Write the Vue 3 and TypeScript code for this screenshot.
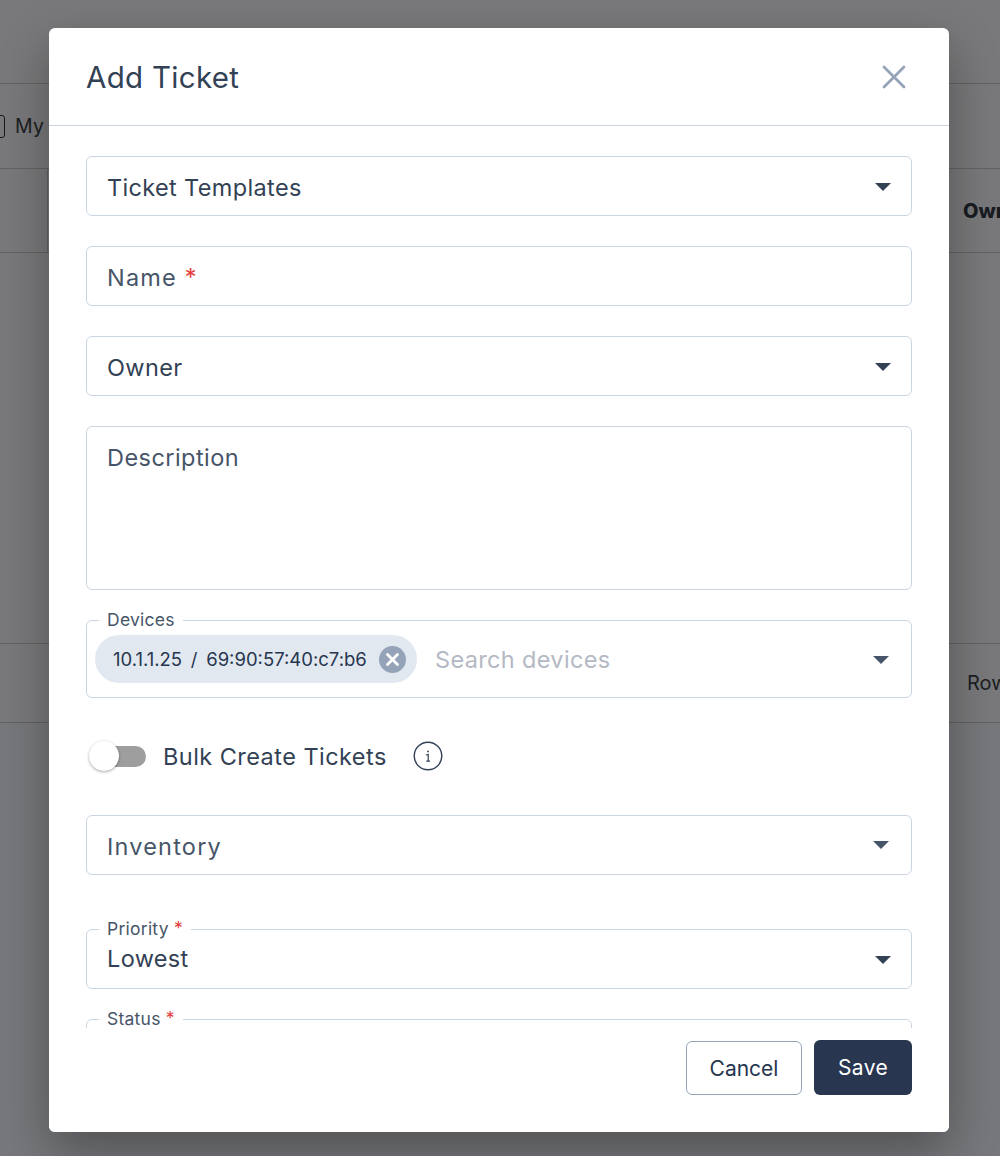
<script setup lang="ts">
const chip = '10.1.1.25 / 69:90:57:40:c7:b6'
</script>

<template>
  <div class="page">
    <header class="top-bar"></header>
    <div class="filter-bar">
      <span class="checkbox"></span>
      <span class="filter-label">My Tickets</span>
    </div>
    <div class="table-head">
      <span class="head-first"></span>
      <span class="head-cell">Owner</span>
    </div>
    <div class="table-empty"></div>
    <div class="table-foot">
      <span class="foot-text">Rows</span>
    </div>
    <div class="page-rest"></div>

    <div class="backdrop"></div>

    <section class="modal">
      <div class="modal-head">
        <h2 class="title">Add Ticket</h2>
        <svg class="close" width="24" height="24" viewBox="0 0 24 24" fill="none">
          <path d="M2 2 L22 22 M22 2 L2 22" stroke="#94a3b8" stroke-width="2.8" stroke-linecap="round" />
        </svg>
      </div>

      <div class="modal-body">
        <div class="field box">
          <span class="value">Ticket Templates</span>
          <span class="caret"></span>
        </div>
        <div class="field box">
          <span class="ph wide">Name <em class="req">*</em></span>
        </div>
        <div class="field box">
          <span class="value">Owner</span>
          <span class="caret"></span>
        </div>
        <div class="field textarea">
          <span class="ph">Description</span>
        </div>
        <div class="field devices">
          <label class="legend">Devices</label>
          <span class="chip">
            <span class="chip-text">{{ chip }}</span>
            <svg class="chip-x" width="27" height="27" viewBox="0 0 27 27">
              <circle cx="13.5" cy="13.5" r="13.5" fill="#94a3b8" />
              <path d="M8.5 8.5 L18.5 18.5 M18.5 8.5 L8.5 18.5" stroke="#fff" stroke-width="2.8" stroke-linecap="round" />
            </svg>
          </span>
          <span class="search">Search devices</span>
          <span class="caret soft"></span>
        </div>

        <div class="toggle-row">
          <span class="toggle"><span class="knob"></span></span>
          <span class="toggle-label">Bulk Create Tickets</span>
          <svg class="info" width="30" height="30" viewBox="0 0 30 30" fill="none">
            <circle cx="15" cy="15" r="13.8" stroke="#334155" stroke-width="1.4" />
            <path d="M13.6 13.8 L15.2 13.5 L15.2 20 M13.8 20.2 L16.6 20.2" stroke="#334155" stroke-width="1.2" stroke-linecap="round" />
            <circle cx="15" cy="10.4" r="0.9" fill="#334155" />
          </svg>
        </div>

        <div class="field box inventory">
          <span class="ph wide">Inventory</span>
          <span class="caret soft"></span>
        </div>

        <div class="field box priority">
          <label class="legend">Priority <em class="req">*</em></label>
          <span class="value low">Lowest</span>
          <span class="caret"></span>
        </div>
        <div class="field box">
          <label class="legend">Status <em class="req">*</em></label>
        </div>
      </div>

      <div class="modal-foot">
        <button class="btn cancel" type="button">Cancel</button>
        <button class="btn save" type="button">Save</button>
      </div>
    </section>
  </div>
</template>

<style>
html, body { margin: 0; padding: 0; }
</style>

<style scoped>
.page {
  position: relative;
  width: 1000px;
  height: 1156px;
  overflow: hidden;
  background: #f2f3f6;
  font-family: Inter, "Liberation Sans", sans-serif;
  display: flex;
  flex-direction: column;
}
.top-bar { height: 83px; flex: none; border-bottom: 1px solid #c4c4c6; box-sizing: content-box; }
.filter-bar {
  height: 85px;
  flex: none;
  border-bottom: 1px solid #c4c4c6;
  display: flex;
  align-items: center;
  margin-left: -14px;
  box-sizing: border-box;
}
.checkbox { width: 19px; height: 23px; border: 1.5px solid #333; border-radius: 3px; box-sizing: border-box; flex: none; }
.filter-label { font-size: 19.5px; letter-spacing: 0.2px; color: #3a3f47; margin-left: 10px; white-space: nowrap; }
.table-head {
  height: 83px;
  flex: none;
  border-bottom: 1px solid #c4c4c6;
  display: flex;
  align-items: center;
}
.head-first { width: 47px; height: 100%; flex: none; border-right: 1px solid #c4c4c6; }
.head-cell { margin-left: 915px; font-size: 20px; font-weight: 800; color: #333a45; white-space: nowrap; }
.table-empty { height: 390px; flex: none; }
.table-foot {
  height: 80px;
  flex: none;
  border-top: 1px solid #c4c4c6;
  border-bottom: 1px solid #c4c4c6;
  display: flex;
  align-items: center;
  padding-left: 967px;
  box-sizing: border-box;
}
.foot-text { font-size: 20px; color: #3a3f47; white-space: nowrap; }
.page-rest { flex: 1; background: #eef1f6; }
.backdrop { position: absolute; inset: 0; background: rgba(0, 0, 0, 0.5); }

.modal {
  position: absolute;
  left: 49px;
  top: 28px;
  width: 900px;
  height: 1104px;
  background: #fff;
  border-radius: 6px;
  box-shadow: 0 20px 50px 0 rgba(0, 0, 0, 0.32);
  display: flex;
  flex-direction: column;
  overflow: hidden;
}
.modal-head {
  height: 98px;
  flex: none;
  box-sizing: border-box;
  border-bottom: 1px solid #cbd5e1;
  display: flex;
  align-items: center;
  justify-content: space-between;
  padding: 0 44px 0 37px;
}
.title { margin: 0; font-size: 29.5px; letter-spacing: 0.3px; font-weight: 400; color: #334155; }
.close { display: block; margin-right: -1px; }

.modal-body {
  flex: 1;
  min-height: 0;
  overflow: hidden;
  padding: 30px 37px 0;
  display: flex;
  flex-direction: column;
  gap: 30px;
}
.field {
  position: relative;
  flex: none;
  border: 1px solid #cbd5e1;
  border-radius: 6px;
  box-sizing: border-box;
  display: flex;
  align-items: center;
  padding: 0 20px;
  font-size: 23.5px;
  letter-spacing: 0.35px;
}
.box { height: 60px; padding-top: 2px; }
.textarea { height: 164px; align-items: flex-start; padding-top: 16px; letter-spacing: 0.45px; }
.value { color: #334155; flex: 1; }
.ph { color: #475569; flex: 1; }
.wide { letter-spacing: 1.2px; }
.req {
  position: relative;
  top: -1px;
  color: #e53e3e;
  font-style: normal;
  font-size: 1em;
  letter-spacing: 0;
}
.caret {
  width: 0;
  height: 0;
  border-left: 8px solid transparent;
  border-right: 8px solid transparent;
  border-top: 8px solid #334155;
}
.caret.soft { border-top-color: #475569; margin-right: 2px; }
.inventory .caret { margin-bottom: 2px; }
.devices .caret { margin-top: 2px; }
.legend {
  position: absolute;
  left: 12px;
  top: -11px;
  padding: 0 8px;
  background: #fff;
  font-size: 17.5px;
  letter-spacing: 0.25px;
  line-height: 20px;
  color: #475569;
  white-space: nowrap;
}
.devices { height: 78px; padding-left: 8px; }
.chip {
  display: flex;
  align-items: center;
  height: 48px;
  width: 322px;
  box-sizing: border-box;
  padding: 0 11px 0 18px;
  border-radius: 24px;
  background: #e2e8f0;
  justify-content: space-between;
  flex: none;
}
.chip-text { font-size: 18.5px; letter-spacing: 0; word-spacing: 3.5px; color: #27364f; white-space: nowrap; }
.chip-x { display: block; flex: none; }
.search { margin-left: 18px; flex: 1; color: #b4b9c4; }

.toggle-row {
  height: 57px;
  flex: none;
  display: flex;
  align-items: center;
}
.toggle {
  position: relative;
  display: block;
  width: 42px;
  height: 21px;
  border-radius: 11px;
  background: #9e9e9e;
  margin-left: 18px;
}
.knob {
  position: absolute;
  left: -15px;
  top: -5px;
  width: 30px;
  height: 30px;
  border-radius: 50%;
  background: #fff;
  box-shadow: 0 1px 3px rgba(0, 0, 0, 0.35);
}
.toggle-label { margin-left: 17px; font-size: 23.5px; letter-spacing: 0.45px; color: #334155; white-space: nowrap; }
.info { margin-left: 26px; margin-top: -1px; display: block; }
.priority { margin-top: 24px; }
.low { margin-bottom: 4px; }

.modal-foot {
  height: 104px;
  flex: none;
  background: #fff;
  display: flex;
  justify-content: flex-end;
  align-items: flex-start;
  gap: 12px;
  padding: 12px 37px 0 0;
  box-sizing: border-box;
}
.btn {
  font-family: inherit;
  font-size: 21px;
  border-radius: 6px;
  box-sizing: border-box;
  cursor: pointer;
}
.cancel {
  width: 116px;
  height: 54px;
  margin-top: 1px;
  background: #fff;
  border: 1px solid #94a3b8;
  color: #27364f;
}
.save {
  width: 98px;
  height: 55px;
  background: #283650;
  border: none;
  color: #fff;
  letter-spacing: 0.4px;
}
</style>
